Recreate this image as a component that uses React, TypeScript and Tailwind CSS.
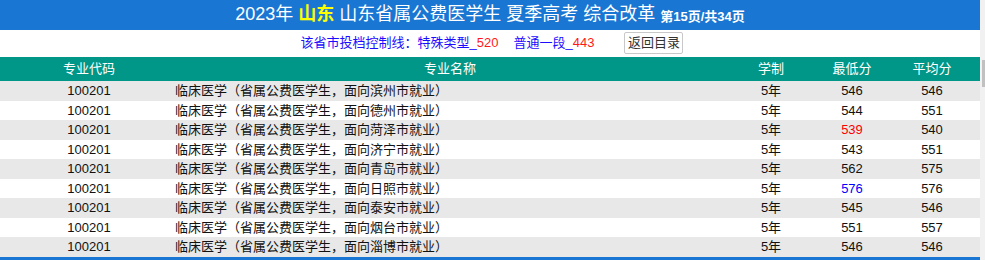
import React from "react";

const rows = [
  { city: "滨州", min: "546", avg: "546" },
  { city: "德州", min: "544", avg: "551" },
  { city: "菏泽", min: "539", avg: "540", minColor: "text-[#ff0000]" },
  { city: "济宁", min: "543", avg: "551" },
  { city: "青岛", min: "562", avg: "575" },
  { city: "日照", min: "576", avg: "576", minColor: "text-[#0000ff]" },
  { city: "泰安", min: "545", avg: "546" },
  { city: "烟台", min: "551", avg: "557" },
  { city: "淄博", min: "546", avg: "546" },
];

const cols = "grid grid-cols-[174px_552px_90px_72px_88px]";

export default function App() {
  return (
    <div
      className="flex h-[260px] w-[985px] overflow-hidden bg-white text-[13px] text-[#111]"
      style={{ fontFamily: '"Liberation Sans", Arial, "Noto Sans CJK SC", sans-serif' }}
    >
      <div className="flex w-[980px] flex-col">
        <div className="flex h-[30px] items-center justify-center bg-[#1976d2] text-[18px] text-white">
          <span>2023年</span>
          <span className="ml-[5px] font-bold text-[#ffff00]">山东</span>
          <span className="ml-[5px]">山东省属公费医学生 夏季高考 综合改革</span>
          <span className="ml-[5px] mt-[3px] text-[13px] font-bold">第15页/共34页</span>
        </div>

        <div className="flex h-[27px] items-center justify-center pl-[4px]">
          <span className="text-[#1a0dff]">该省市投档控制线：特殊类型_</span>
          <span className="text-[#ff1a1a]">520</span>
          <span className="ml-[15px] text-[#1a0dff]">普通一段_</span>
          <span className="text-[#ff1a1a]">443</span>
          <button className="ml-[30px] h-[22px] w-[59px] rounded-[2px] border border-[#c8c8c8] bg-white text-[13px] text-[#333]">
            返回目录
          </button>
        </div>

        <div className={`${cols} h-[25px] items-center bg-[#009688] text-white`}>
          <div className="pl-[4px] text-center">专业代码</div>
          <div className="text-center">专业名称</div>
          <div className="text-center">学制</div>
          <div className="text-center">最低分</div>
          <div className="text-center">平均分</div>
        </div>

        {rows.map((r, i) => (
          <div
            key={r.city}
            className={`${cols} h-[19.5px] items-center ${i % 2 === 0 ? "bg-[#e8e8e8]" : "bg-white"}`}
          >
            <div className="pl-[4px] text-center">100201</div>
            <div className="pl-[1px]">临床医学（省属公费医学生，面向{r.city}市就业）</div>
            <div className="text-center">5年</div>
            <div className={`text-center ${r.minColor ?? ""}`}>{r.min}</div>
            <div className="text-center">{r.avg}</div>
          </div>
        ))}

        <div className="h-[3px] shrink-0 bg-[#1976d2]" />
      </div>

      <div className="w-[5px] bg-[#f1f1f1]">
        <div className="ml-[2px] mt-[60px] h-[27px] w-[3px] bg-[#c1c1c1]" />
      </div>
    </div>
  );
}
